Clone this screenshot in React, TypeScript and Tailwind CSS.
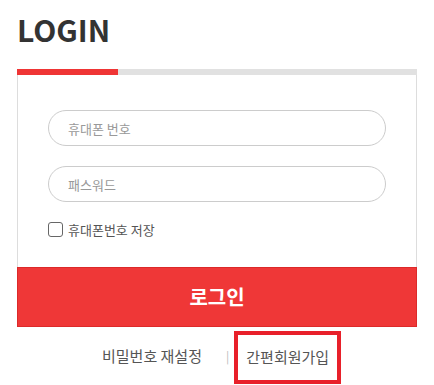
import React from "react";

export default function App() {
  return (
    <div className="w-[434px] h-[385px] bg-white overflow-hidden" style={{ fontFamily: '"Noto Sans CJK KR", sans-serif' }}>
      <div className="pl-[17px]">
        <h1 className="pt-[9px] h-[69px] text-[30px] leading-[40px] font-bold text-[#333333]" style={{ fontFamily: '"Noto Sans CJK KR", sans-serif' }}>LOGIN</h1>
        <div className="w-[400px]">
          <div className="h-[6px] bg-[#e1e1e1]">
            <div className="w-[101px] h-full bg-[#ef3535]" />
          </div>
          <div className="border-x border-[#dddddd] px-[30px] pt-[35px] pb-[30px]">
            <input
              className="block w-[338px] h-[36px] rounded-full border border-[#cccccc] px-[19px] text-[13px] text-[#333] placeholder:text-[#999999] outline-none"
              placeholder="휴대폰 번호"
              style={{ fontFamily: '"Noto Sans CJK KR", sans-serif' }}
            />
            <input
              type="password"
              className="block mt-[20px] w-[338px] h-[36px] rounded-full border border-[#cccccc] px-[19px] text-[13px] text-[#333] placeholder:text-[#999999] outline-none"
              placeholder="패스워드"
              style={{ fontFamily: '"Noto Sans CJK KR", sans-serif' }}
            />
            <label className="flex items-center mt-[20px] h-[15px] gap-[5px] text-[13px] text-[#555555]">
              <span className="w-[15px] h-[15px] rounded-[3px] border border-[#666666] bg-white" />
              <span>휴대폰번호 저장</span>
            </label>
          </div>
          <button
            className="block w-[400px] h-[60px] bg-[#ef3737] border border-[#dc2a2a] text-white text-[20px] font-bold"
            style={{ fontFamily: '"Noto Sans CJK KR", sans-serif' }}
          >
            로그인
          </button>
        </div>
        <div className="flex items-center h-[58px] text-[15px] text-[#555555]">
          <span className="ml-[85px]">비밀번호 재설정</span>
          <span className="ml-[24px] text-[#bbbbbb] text-[12px]">|</span>
          <span className="ml-[5px] border-[4px] border-[#e8202a] h-[53px] w-[107px] flex items-center justify-center mt-[3px]">간편회원가입</span>
        </div>
      </div>
    </div>
  );
}
